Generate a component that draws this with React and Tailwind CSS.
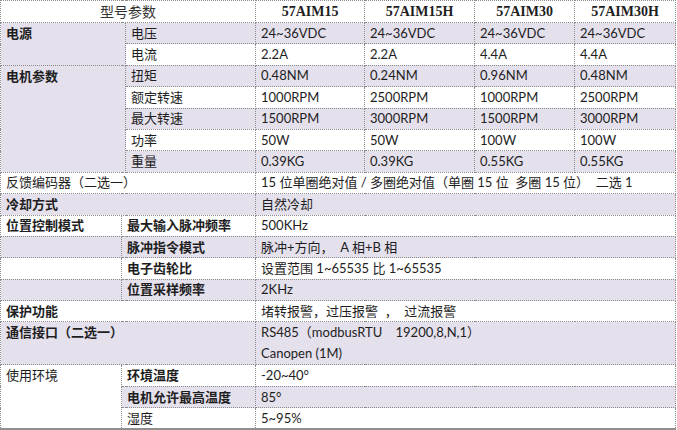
import React from "react";

const LAV = "bg-[#e4e0ec]";
const cell =
  "border border-dotted border-[#8c8c8c] px-[5px] text-[13px] leading-[15px] text-[#1e1e1e] align-middle whitespace-nowrap";

const specRows = [
  { group: "电源", span: 2, label: "电压", values: ["24~36VDC", "24~36VDC", "24~36VDC", "24~36VDC"], lav: true },
  { label: "电流", values: ["2.2A", "2.2A", "4.4A", "4.4A"] },
  { group: "电机参数", span: 5, label: "扭矩", values: ["0.48NM", "0.24NM", "0.96NM", "0.48NM"], lav: true },
  { label: "额定转速", values: ["1000RPM", "2500RPM", "1000RPM", "2500RPM"] },
  { label: "最大转速", values: ["1500RPM", "3000RPM", "1500RPM", "3000RPM"], lav: true },
  { label: "功率", values: ["50W", "50W", "100W", "100W"] },
  { label: "重量", values: ["0.39KG", "0.39KG", "0.55KG", "0.55KG"], lav: true },
];

const positionRows = [
  { first: "位置控制模式", label: "最大输入脉冲频率", value: "500KHz" },
  { label: "脉冲指令模式", value: "脉冲+方向，\u00a0\u00a0A 相+B 相", lav: true },
  { label: "电子齿轮比", value: "设置范围 1~65535 比 1~65535" },
  { label: "位置采样频率", value: "2KHz", lav: true },
];

const App = () => {
  return (
    <div className="w-[677px] h-[430px] bg-white overflow-hidden" style={{ fontFamily: 'Lato, "Noto Sans CJK SC", sans-serif' }}>
      <table className="w-[675px] border-collapse table-fixed border-b-2 border-b-[#8f8f8f]">
        <colgroup>
          <col className="w-[121px]" />
          <col className="w-[4px]" />
          <col className="w-[130px]" />
          <col className="w-[109px]" />
          <col className="w-[110px]" />
          <col className="w-[100px]" />
          <col className="w-[101px]" />
        </colgroup>
        <tbody>
          <tr className="h-[22px]">
            <td colSpan={3} className={`${cell} text-center text-[14px] text-[#333]`}>
              型号参数
            </td>
            {["57AIM15", "57AIM15H", "57AIM30", "57AIM30H"].map((m) => (
              <td
                key={m}
                className={`${cell} text-center text-[14px] font-bold`}
                style={{ fontFamily: '"Liberation Serif", serif' }}
              >
                {m}
              </td>
            ))}
          </tr>

          {specRows.map((row) => (
            <tr key={row.label} className={`h-[21.4px] ${row.lav ? LAV : ""}`}>
              {row.group && (
                <td colSpan={2} rowSpan={row.span} className={`${cell} ${LAV} align-top pt-[3px] font-bold`}>
                  {row.group}
                </td>
              )}
              <td className={cell}>{row.label}</td>
              {row.values.map((v, i) => (
                <td key={i} className={cell}>
                  {v}
                </td>
              ))}
            </tr>
          ))}

          <tr className="h-[21.4px]">
            <td colSpan={3} className={cell}>反馈编码器（二选一）</td>
            <td colSpan={4} className={cell}>
              15 位单圈绝对值 / 多圈绝对值（单圈 15 位&nbsp;&nbsp;多圈 15 位）&nbsp;&nbsp;二选 1
            </td>
          </tr>
          <tr className={`h-[21.4px] ${LAV}`}>
            <td colSpan={3} className={`${cell} font-bold`}>冷却方式</td>
            <td colSpan={4} className={cell}>自然冷却</td>
          </tr>

          {positionRows.map((row) => (
            <tr key={row.label} className={`h-[21.4px] ${row.lav ? LAV : ""}`}>
              <td className={`${cell} font-bold`}>{row.first || ""}</td>
              <td colSpan={2} className={`${cell} font-bold`}>{row.label}</td>
              <td colSpan={4} className={cell}>{row.value}</td>
            </tr>
          ))}

          <tr className="h-[21.4px]">
            <td colSpan={3} className={`${cell} font-bold`}>保护功能</td>
            <td colSpan={4} className={cell}>堵转报警，过压报警&nbsp;&nbsp;，&nbsp;&nbsp;过流报警</td>
          </tr>
          <tr className={`h-[43px] ${LAV}`}>
            <td colSpan={3} className={`${cell} align-top pt-[3px] font-bold`}>通信接口（二选一）</td>
            <td colSpan={4} className={`${cell} leading-[21px]`}>
              <div>RS485（modbusRTU&nbsp;&nbsp;&nbsp;&nbsp;19200,8,N,1）</div>
              <div>Canopen (1M)</div>
            </td>
          </tr>

          <tr className="h-[21.4px]">
            <td rowSpan={3} className={`${cell} bg-white align-top pt-[3px]`}>使用环境</td>
            <td colSpan={2} className={`${cell} font-bold`}>环境温度</td>
            <td colSpan={4} className={cell}>-20~40°</td>
          </tr>
          <tr className={`h-[21.4px] ${LAV}`}>
            <td colSpan={2} className={`${cell} font-bold`}>电机允许最高温度</td>
            <td colSpan={4} className={cell}>85°</td>
          </tr>
          <tr className="h-[21.4px]">
            <td colSpan={2} className={cell}>湿度</td>
            <td colSpan={4} className={cell}>5~95%</td>
          </tr>
        </tbody>
      </table>
    </div>
  );
};

export default App;
